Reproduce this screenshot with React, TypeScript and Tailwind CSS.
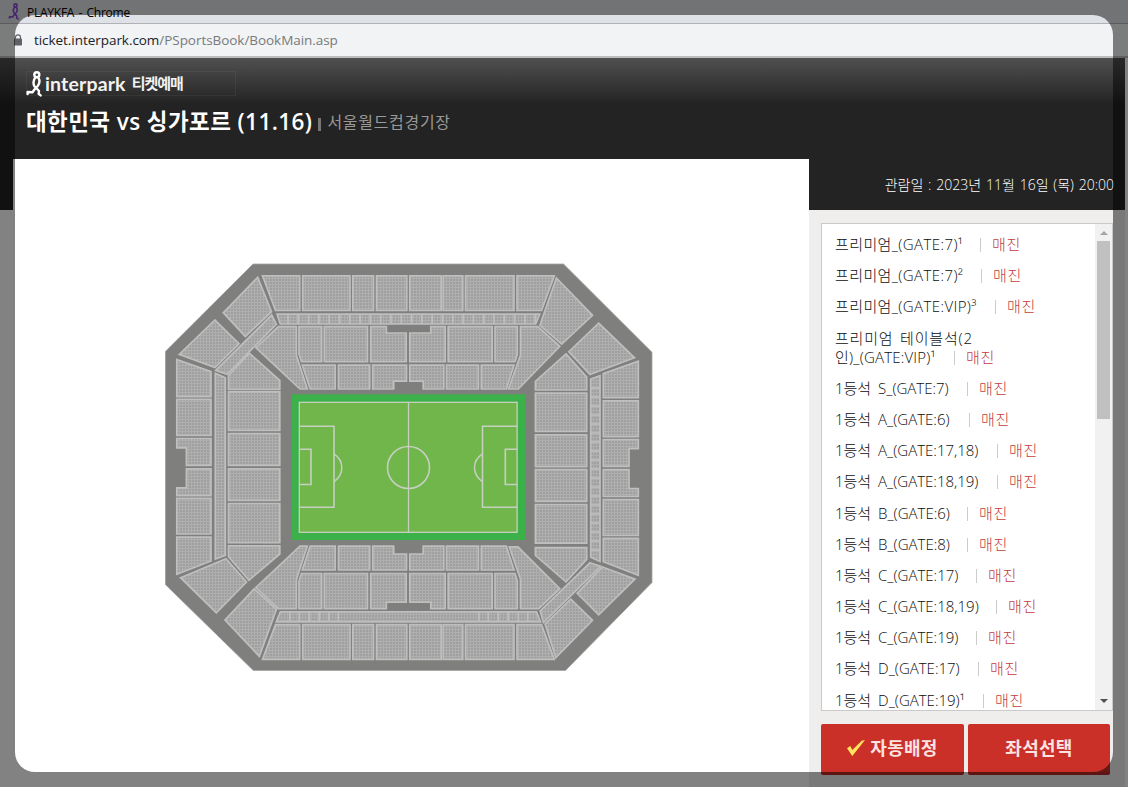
type Seat = { lead?: string; name: string; width: string };

const SEATS: Seat[] = [
  { name: "프리미엄_(GATE:7)¹", width: "w-[145px] tracking-[0.4px]" },
  { name: "프리미엄_(GATE:7)²", width: "w-[146px] tracking-[0.4px]" },
  { name: "프리미엄_(GATE:VIP)³", width: "w-[160px] tracking-[0.4px]" },
  { lead: "프리미엄 테이블석(2", name: "인)_(GATE:VIP)¹", width: "w-[119px] tracking-[0.2px]" },
  { name: "1등석 S_(GATE:7)", width: "w-[132px]" },
  { name: "1등석 A_(GATE:6)", width: "w-[134px]" },
  { name: "1등석 A_(GATE:17,18)", width: "w-[162px]" },
  { name: "1등석 A_(GATE:18,19)", width: "w-[162px]" },
  { name: "1등석 B_(GATE:6)", width: "w-[132px]" },
  { name: "1등석 B_(GATE:8)", width: "w-[132px]" },
  { name: "1등석 C_(GATE:17)", width: "w-[141px]" },
  { name: "1등석 C_(GATE:18,19)", width: "w-[161px]" },
  { name: "1등석 C_(GATE:19)", width: "w-[141px]" },
  { name: "1등석 D_(GATE:17)", width: "w-[143px]" },
  { name: "1등석 D_(GATE:19)¹", width: "w-[148px]" },
];

// x1, y1, x2, y2
const box = (a: number, b: number, c: number, d: number) => `${a},${b} ${c},${b} ${c},${d} ${a},${d}`;

// North stand, mirrored for the south stand
const NORTH = [
  "262.5,275.8 299.7,275.8 299.7,310.5 275.5,310.5",
  box(302.7, 275.8, 350, 310.5),
  box(352.8, 275.8, 373.5, 310.5),
  box(376.5, 275.8, 406.8, 310.5),
  box(409.7, 275.8, 441.3, 310.5),
  box(443.2, 275.8, 462.8, 310.5),
  box(465.5, 275.8, 514, 310.5),
  "517,275.8 554.3,275.8 541.5,310.5 517,310.5",
  "299,326.6 321.7,326.6 321.7,361.7 301.5,361.7 299,354",
  box(324.3, 326.6, 367.5, 361.7),
  "370.7,326.6 386.3,326.6 386.3,333 406.2,333 406.2,361.7 370.7,361.7",
  "409.8,333 430.8,333 430.8,326.6 445.2,326.6 445.2,361.7 409.8,361.7",
  box(448.2, 326.6, 492.2, 361.7),
  "495,326.6 517.3,326.6 517.3,354.3 515,361.7 495,361.7",
  "302.3,365.2 335.2,365.2 335.2,389 310.2,389",
  box(338.5, 365.2, 369.7, 389),
  "372.7,365.2 406.5,365.2 406.5,381.2 393.7,381.2 393.7,389 372.7,389",
  "409.8,365.2 443.8,365.2 443.8,389 423.2,389 423.2,381.2 409.8,381.2",
  box(446.5, 365.2, 478.5, 389),
  "481.3,365.2 514,365.2 506.3,389 481.3,389",
  "278.3,326.6 296.4,326.6 296.4,355.5 307.3,389 300,389 255.9,347.7",
];

const SOUTH = NORTH.map((s) =>
  s.split(" ").map((p) => {
    const [x, y] = p.split(",").map(Number);
    return `${x},${935.2 - y}`;
  }).join(" ")
);

const WEST = [
  "257.7,277.3 271.5,311.7 245.3,336.5 223.3,312.7",
  "215,320 239,343.7 215,367.5 179.3,354.3",
  "271.7,315 276.3,324.3 227,374.3 215.7,370.3",
  "176.8,359.5 211,371.7 211,396.6 176.8,396.6",
  box(176.8, 399.4, 211, 435.5),
  "176.8,438.5 211,438.5 211,465.3 186.4,465.3 186.4,447.8 176.8,447.8",
  "186.4,468.8 211,468.8 211,495.6 176.8,495.6 176.8,487.8 186.4,487.8",
  box(176.8, 498.4, 211, 534),
  "176.8,537.2 211,537.2 211,561 176.8,574.2",
  "215.3,373.3 225.3,377.7 225.3,555.3 215.3,559",
  "249.3,353.2 279.8,380.3 279.8,389.3 228.5,389.3 228.5,375.5",
  box(228.5, 391.9, 279.8, 430.3),
  box(228.5, 433.5, 279.8, 465.3),
  box(228.5, 468.8, 279.8, 500.4),
  box(228.5, 503.5, 279.8, 542.6),
  "228.5,545.8 279.8,545.8 279.8,554 249,580.2 228.5,556.7",
  "226,558.8 246.5,582 216.3,612.8 180.6,577.7",
  "254.3,588.8 276.5,609.3 259.3,656.3 225,620",
];

const EAST = [
  "520.5,326.6 538,326.6 559.8,346.3 518.3,389 508.5,389 520.5,355",
  "556.4,278 592.5,315.3 561.7,344.1 539.9,325.3",
  "598.7,323.2 634.5,357.7 590,374.5 568.9,351.7",
  "638.3,361.2 638.3,397.7 603.3,397.7 603.3,373.7",
  box(603.3, 400.8, 638.3, 436.6),
  "603.3,439.5 638.3,439.5 638.3,448.7 629,448.7 629,466.3 603.3,466.3",
  "603.3,469.7 629,469.7 629,488.5 638.3,488.5 638.3,496.5 603.3,496.5",
  box(603.3, 499.5, 638.3, 535.5),
  "603.3,538.4 638.3,538.4 638.3,575.3 603.3,561.7",
  "590.7,379 600,375.7 600,561.5 590.7,557.3",
  "566,353.9 586.7,377 586.7,390 535.4,390 535.4,381.3",
  box(535.4, 393.2, 586.7, 431.3),
  box(535.4, 434.8, 586.7, 466.6),
  box(535.4, 469.5, 586.7, 501.3),
  box(535.4, 504.5, 586.7, 543.2),
  "535.4,547.7 586.7,547.7 586.7,559.3 566,581.8 535.4,555.3",
  "590,562.8 600.8,566.4 543.5,622.5 540.2,611",
  "602.5,567 635,579 598.7,614.8 577.2,593.3",
  "570.7,599.2 592.5,620.3 555.8,657.6 545.1,624",
  "509.3,546.8 518,546.8 559.8,588.7 538.7,608.7 520.5,608.7 520.5,579.3",
];

const STRIPS = [
  "277,314.2 539.7,314.2 535.8,324 280.3,324",
  "280.3,611.8 536.5,611.8 540.5,621.8 276.3,621.8",
];

const SOUTH_TICKS = [290, 299.3, 309.3, 319.3, 329, 338.3, 479, 488.3, 498.3, 508.3, 518.3, 527.7];

function Stadium() {
  return (
    <svg width="488" height="408" viewBox="165 263 488 408" className="block">
      <defs>
        <pattern id="seats" width="3" height="3" patternUnits="userSpaceOnUse">
          <rect width="3" height="3" fill="#b0afb0" />
          <rect width="2" height="2" fill="#a09f9f" />
        </pattern>
      </defs>
      <polygon
        points="253,264 563.5,264 652,352.3 652,582.5 565.5,670.5 253.3,670.5 165.3,584.5 165.3,351.5"
        fill="#7f7f7d"
        stroke="#a3a3a3"
        strokeWidth="0.8"
      />
      <g fill="url(#seats)" stroke="#bfbfbf" strokeWidth="1.7">
        {[...NORTH, ...SOUTH, ...WEST, ...EAST, ...STRIPS].map((points) => (
          <polygon key={points} points={points} />
        ))}
        {Array.from({ length: 25 }, (_, i) => (
          <path key={i} d={`M${288 + i * 10.3} 314V324`} />
        ))}
        {SOUTH_TICKS.map((x) => (
          <path key={x} d={`M${x} 612V622`} />
        ))}
        {Array.from({ length: 19 }, (_, i) => (
          <path key={i} d={`M591 ${388 + i * 9}H600`} />
        ))}
      </g>

      {/* Pitch */}
      <rect x="291.7" y="394.3" width="233.8" height="145.7" fill="#3cb14a" />
      <rect x="299.3" y="402.3" width="217.8" height="130" fill="#70b64b" />
      <g fill="none" stroke="#c6d0c0" strokeWidth="1.3">
        <rect x="299.3" y="402.3" width="217.8" height="130" />
        <path d="M408.5 402V532" />
        <circle cx="408.5" cy="467.5" r="21" strokeWidth="1.6" />
        <path d="M299.3 426.3H334V507.2H299.3M299.3 449.2H311V484.5H299.3" strokeWidth="1.6" />
        <path d="M517.3 426.3H482.5V507.2H517.3M517.3 449.2H505.3V484.5H517.3" strokeWidth="1.6" />
        <path d="M334 453.8Q341.8 459 341.8 467.5T334 481.8M482.5 453.8Q474.5 459 474.5 467.5T482.5 481.8" strokeWidth="1.5" />
      </g>
    </svg>
  );
}

function Runner({ className }: { className: string }) {
  return (
    <svg viewBox="0 0 17 26" className={className} fill="none" stroke="currentColor" strokeWidth="2.4" strokeLinecap="round" strokeLinejoin="round">
      <circle cx="10.8" cy="3.8" r="2.5" />
      <path d="M9.6 6C7.3 9 6.7 12 8.5 15.5M11.8 6C14.2 9 14 12 11.7 15L8.5 18.5 6.5 21.3 1.6 21V23M9.6 16.3L13 20 12.6 22.8 14.6 24.4" />
    </svg>
  );
}

function BrowserBar() {
  return (
    <>
      <div className="flex h-6 items-center border-b border-[#b0b2b7] bg-[#dee1e6] pl-2">
        <Runner className="-mt-px h-[17px] w-[12px] text-[#8c45dc]" />
        <span className="ml-[7px] mt-0.5 text-[12px] tracking-[-0.25px] text-black [word-spacing:1.5px]">PLAYKFA - Chrome</span>
      </div>
      <div className="flex h-[34px] items-center border-b-2 border-[#bcbdbf] bg-[#f1f3f4] pl-[13px]">
        <svg viewBox="0 0 10 12" className="h-3 w-[10px]">
          <path d="M2.5 5V3.3a2.5 2.5 0 0 1 5 0V5" fill="none" stroke="#5f6368" strokeWidth="1.2" />
          <rect x="1" y="4.5" width="8" height="7" rx="0.8" fill="#5f6368" />
        </svg>
        <span className="ml-[11px] text-[13.5px] tracking-[-0.05px] text-[#202124]">
          ticket.interpark.com<span className="text-[#777a7e]">/PSportsBook/BookMain.asp</span>
        </span>
      </div>
    </>
  );
}

function Header() {
  return (
    <header className="h-[101px] bg-[#232323] bg-[linear-gradient(180deg,#505050_0px,#232323_46px)] pl-[26px] pt-[13px]">
      <div className="flex h-[25px] w-[210px] items-center border border-white/5 text-white">
        <Runner className="-ml-px h-[26px] w-[17px] shrink-0" />
        <span className="ml-[2px] whitespace-nowrap font-[Lato] text-[19.5px] font-bold leading-none tracking-[0.15px] text-[#f2f2f2]">interpark</span>
        <span className="ml-[6px] whitespace-nowrap text-[15px] font-bold leading-none tracking-[-1px] text-[#f2f2f2]">티켓예매</span>
      </div>
      <div className="mt-[9px] flex h-8 items-center whitespace-nowrap">
        <h1 className="mt-px text-[22.5px] font-semibold tracking-[0.42px] text-white">대한민국 vs 싱가포르 (11.16)</h1>
        <span className="ml-[6px] mt-1.5 h-[13px] w-[3px] bg-[#777]" />
        <span className="ml-[6px] mt-px text-[16px] tracking-[0.7px] text-[#999]">서울월드컵경기장</span>
      </div>
    </header>
  );
}

function SeatList() {
  return (
    <div className="flex h-[488px] w-[292px] border border-[#cacaca] bg-white">
      <ul className="flex-1 overflow-hidden pl-[13px] pt-[11px] text-[15px] font-light leading-[19px] text-[#0c0c0c]">
        {SEATS.map((s) => (
          <li key={s.name} className="mb-[12.2px] whitespace-nowrap">
            {s.lead && <div className="tracking-[0.8px] [word-spacing:2px]">{s.lead}</div>}
            <div className="flex items-end">
              <span className={`${s.width} shrink-0 [word-spacing:3px]`}>{s.name}</span>
              <span className="mb-[2px] h-[14px] w-px bg-[#ccc]" />
              <span className="ml-[11px] tracking-[0.8px] text-[#c43c3c]">매진</span>
            </div>
          </li>
        ))}
      </ul>
      <div className="flex w-[17px] flex-col items-center justify-between bg-[#f1f1f1] pb-[7px] pt-[7px]">
        <div>
          <div className="mx-auto h-0 w-0 border-x-4 border-b-4 border-x-transparent border-b-[#a3a3a3]" />
          <div className="mt-[6px] h-[178px] w-[13px] bg-[#c1bfc0]" />
        </div>
        <div className="h-0 w-0 border-x-4 border-t-4 border-x-transparent border-t-[#505050]" />
      </div>
    </div>
  );
}

export default function App() {
  return (
    <div className="relative h-[787px] w-[1128px] overflow-hidden bg-white font-['Open_Sans','Noto_Sans_CJK_KR',sans-serif]">
      <BrowserBar />
      <div className="mr-[3px]">
        <Header />
        <div className="flex h-[628px]">
          <div className="h-[51px] w-[13px] bg-[#232323]" />
          <main className="w-[796px] bg-white pl-[152px] pt-[104px]">
            <Stadium />
          </main>
          <aside className="flex-1 bg-[#efeeed]">
            <div className="flex h-[51px] items-center justify-end whitespace-nowrap bg-[#232323] pr-[11px] text-[14px] font-light text-white [word-spacing:1.2px]">
              관람일 : 2023년 11월 16일 (목) 20:00
            </div>
            <div className="pl-3 pt-[13px]">
              <SeatList />
              <div className="mt-[13px] flex gap-1">
                <button className="flex h-[51px] w-[143px] items-center justify-center rounded-[2px] border-b-[3px] border-[#b52a24] bg-[#ca2f28] text-[18px] font-bold tracking-[0.3px] text-[#fbe3e1]">
                  <svg viewBox="0 0 18 16" className="mr-[5px] h-4 w-[18px]">
                    <path d="M0 8.3L3.3 6 5.3 10 14.7.7 18 0 5.3 16z" fill="#ffe45c" />
                  </svg>
                  자동배정
                </button>
                <button className="flex h-[51px] w-[142px] items-center justify-center rounded-[2px] border-b-[3px] border-[#b52a24] bg-[#ca2f28] text-[18px] font-bold tracking-[0.3px] text-[#fbe3e1]">
                  좌석선택
                </button>
              </div>
            </div>
          </aside>
        </div>
      </div>

      {/* Dimmed frame with a rounded cut-out */}
      <div className="pointer-events-none absolute left-[15px] top-[15px] h-[757px] w-[1098px] rounded-[20px] shadow-[0_0_0_100px_rgba(0,0,0,0.49)]" />
    </div>
  );
}
